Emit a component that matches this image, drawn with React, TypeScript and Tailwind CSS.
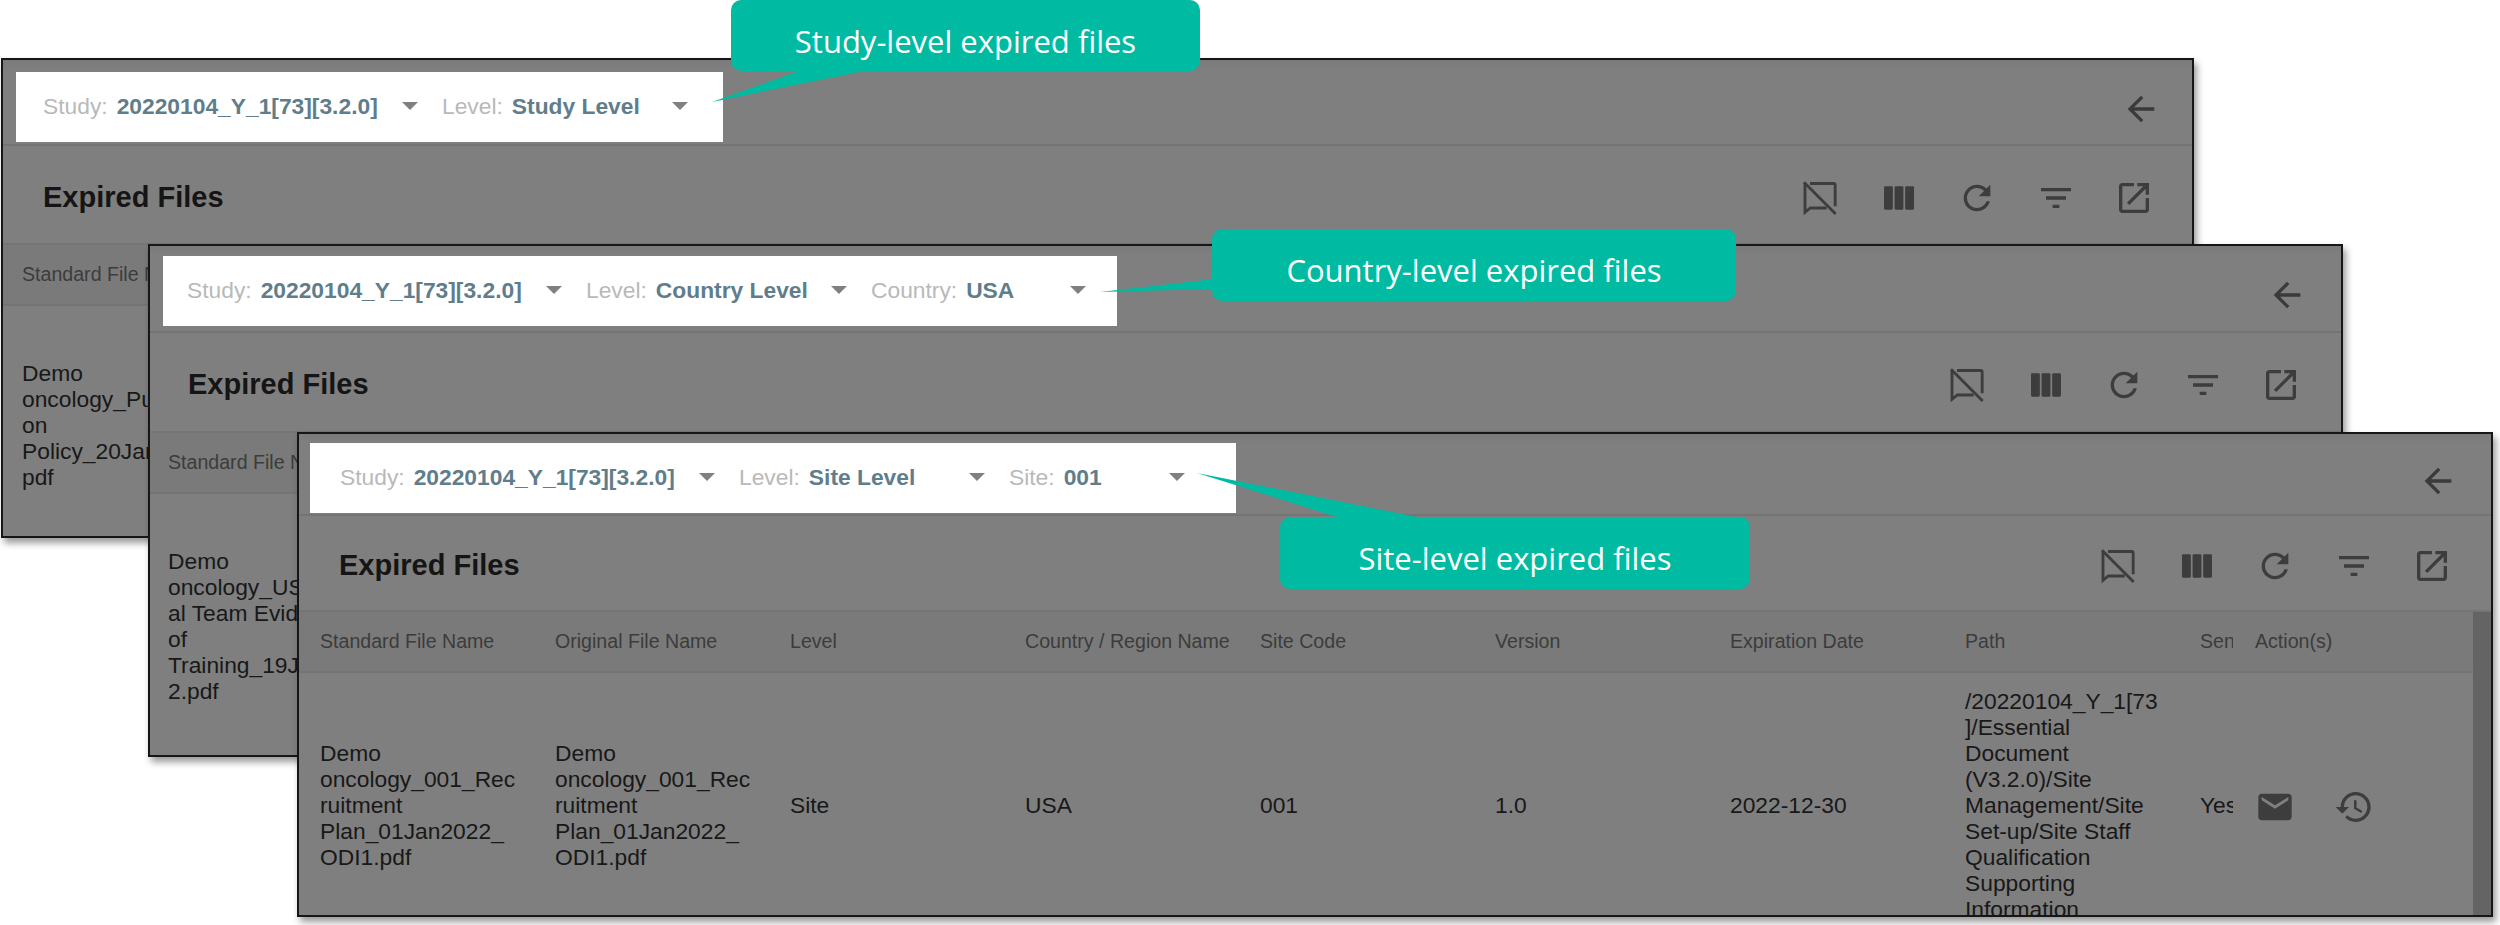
const fontSans = "font-['Liberation_Sans',Arial,sans-serif]";

function ArrowBack() {
  return (
    <svg viewBox="0 0 24 24" className="w-10 h-10 fill-[#3a3a3a]">
      <path d="M20 11H7.83l5.59-5.59L12 4l-8 8 8 8 1.41-1.41L7.83 13H20v-2z" />
    </svg>
  );
}

function NotesOff() {
  return (
    <svg viewBox="0 0 24 24" className="w-10 h-10 fill-none stroke-[#3d3d3d] stroke-[1.7]">
      <path d="M6 3.3h14.2c.5 0 .9.4.9.9V17" />
      <path d="M3 3v17.6L6.2 18H16" />
      <path d="M2.4 2.6l19 19" />
    </svg>
  );
}

function ViewColumn() {
  return (
    <svg viewBox="0 0 24 24" className="w-10 h-10 fill-[#3d3d3d]">
      <rect x="3" y="5" width="5.3" height="14" rx="0.7" />
      <rect x="9.35" y="5" width="5.3" height="14" rx="0.7" />
      <rect x="15.7" y="5" width="5.3" height="14" rx="0.7" />
    </svg>
  );
}

function Refresh() {
  return (
    <svg viewBox="0 0 24 24" className="w-10 h-10 fill-[#3d3d3d]">
      <path d="M17.65 6.35C16.2 4.9 14.21 4 12 4c-4.42 0-7.99 3.58-7.99 8s3.57 8 7.99 8c3.73 0 6.84-2.55 7.73-6h-2.08c-.82 2.33-3.04 4-5.65 4-3.31 0-6-2.69-6-6s2.69-6 6-6c1.66 0 3.14.69 4.22 1.78L13 11h7V4l-2.35 2.35z" />
    </svg>
  );
}

function FilterList() {
  return (
    <svg viewBox="0 0 24 24" className="w-10 h-10 fill-[#3d3d3d]">
      <path d="M10 18h4v-2h-4v2zM3 6v2h18V6H3zm3 7h12v-2H6v2z" />
    </svg>
  );
}

function OpenInNew() {
  return (
    <svg viewBox="0 0 24 24" className="w-10 h-10 fill-[#3d3d3d]">
      <path d="M19 19H5V5h7V3H5c-1.11 0-2 .9-2 2v14c0 1.1.89 2 2 2h14c1.1 0 2-.9 2-2v-7h-2v7zM14 3v2h3.59l-9.83 9.83 1.41 1.41L19 6.41V10h2V3h-7z" />
    </svg>
  );
}

function Mail() {
  return (
    <svg viewBox="0 0 24 24" className="w-10 h-10 fill-[#3d3d3d]">
      <path d="M20 4H4c-1.1 0-1.99.9-1.99 2L2 18c0 1.1.9 2 2 2h16c1.1 0 2-.9 2-2V6c0-1.1-.9-2-2-2zm0 4-8 5-8-5V6l8 5 8-5v2z" />
    </svg>
  );
}

function History() {
  return (
    <svg viewBox="0 0 24 24" className="w-10 h-10 fill-[#3d3d3d]">
      <path d="M13 3c-4.97 0-9 4.03-9 9H1l3.89 3.89.07.14L9 12H6c0-3.87 3.13-7 7-7s7 3.13 7 7-3.13 7-7 7c-1.93 0-3.68-.79-4.94-2.06l-1.42 1.42C8.27 19.99 10.51 21 13 21c4.97 0 9-4.03 9-9s-4.03-9-9-9zm-1 5v5l4.28 2.54.72-1.21-3.5-2.08V8H12z" />
    </svg>
  );
}

function Select({ label, value, width }: { label: string; value: string; width: string }) {
  return (
    <div className={`flex items-center shrink-0 pr-[24px] ${width}`}>
      <span className="text-[#b9b9b9] mr-[9px]">{label}</span>
      <span className="font-bold text-[#607d8b]">{value}</span>
      <span className="ml-auto w-0 h-0 border-x-[8px] border-x-transparent border-t-[8px] border-t-[#808080]" />
    </div>
  );
}

function Lines({ lines }: { lines: string[] }) {
  return (
    <div className="whitespace-nowrap">
      {lines.map((l, i) => (
        <div key={i}>{l}</div>
      ))}
    </div>
  );
}

type Filter = { label: string; value: string; width: string };

function Window({
  frame,
  head,
  bar,
  titleRow,
  bodyPad,
  rowHeight,
  arrowPad,
  filters,
  lines,
  full,
}: {
  frame: string;
  head: string;
  bar: string;
  titleRow: string;
  bodyPad: string;
  rowHeight: string;
  arrowPad: string;
  filters: Filter[];
  lines: string[];
  full?: boolean;
}) {
  return (
    <div className={`absolute overflow-hidden flex flex-col bg-[#7f7f7f] border-2 border-[#161616] shadow-[3px_5px_7px_rgba(0,0,0,0.4)] ${fontSans} ${frame}`}>
      {/* Top bar */}
      <div className={`flex items-start justify-between shrink-0 border-b-2 border-[#747474] bg-gradient-to-b from-[#7a7a7a] to-[#7f7f7f] to-[9px] ${head}`}>
        <div className={`flex items-center h-[70px] pb-[2px] bg-white text-[22.8px] ${bar}`}>
          {filters.map((f) => (
            <Select key={f.label} label={f.label} value={f.value} width={f.width} />
          ))}
        </div>
        <div className={`self-center pt-[13px] ${arrowPad}`}>
          <ArrowBack />
        </div>
      </div>

      {/* Title */}
      <div className={`flex items-center justify-between shrink-0 pt-[6px] ${titleRow}`}>
        <h2 className="font-bold text-[29px] text-[#151515]">Expired Files</h2>
        <div className="flex items-center gap-[38.5px]">
          <NotesOff />
          <ViewColumn />
          <Refresh />
          <FilterList />
          <OpenInNew />
        </div>
      </div>

      {/* Table */}
      <div className="flex flex-1 min-h-0 border-t-2 border-[#757575]">
        <div className="flex-1 min-w-0">
          <div className={`grid grid-cols-[235px_235px_235px_235px_235px_235px_235px_235px_55px_1fr] items-center h-[61px] border-b-2 border-[#747474] bg-[#7a7a7a] text-[19.6px] text-[#3c3c3c] ${bodyPad}`}>
            <div className="whitespace-nowrap">Standard File Name</div>
            {full && (
              <>
                <div>Original File Name</div>
                <div>Level</div>
                <div>Country / Region Name</div>
                <div>Site Code</div>
                <div>Version</div>
                <div>Expiration Date</div>
                <div>Path</div>
                <div className="w-[33px] overflow-hidden whitespace-nowrap">Send</div>
                <div>Action(s)</div>
              </>
            )}
          </div>
          <div className={`grid grid-cols-[235px_235px_235px_235px_235px_235px_235px_235px_55px_1fr] items-center text-[22.8px] leading-[26px] text-[#181818] ${rowHeight} ${bodyPad}`}>
            <Lines lines={lines} />
            {full && (
              <>
                <Lines lines={lines} />
                <div>Site</div>
                <div>USA</div>
                <div>001</div>
                <div>1.0</div>
                <div>2022-12-30</div>
                <Lines
                  lines={[
                    "/20220104_Y_1[73",
                    "]/Essential",
                    "Document",
                    "(V3.2.0)/Site",
                    "Management/Site",
                    "Set-up/Site Staff",
                    "Qualification",
                    "Supporting",
                    "Information",
                  ]}
                />
                <div className="w-[33px] overflow-hidden">Yes</div>
                <div className="flex items-center gap-[39px] pt-[4px]">
                  <Mail />
                  <History />
                </div>
              </>
            )}
          </div>
        </div>
        <div className="w-[18px] shrink-0 bg-[#646464]" />
      </div>
    </div>
  );
}

function Callout({ box, text, tip }: { box: string; text: string; tip: string }) {
  return (
    <>
      <svg viewBox="0 0 2500 925" className="absolute inset-0 w-[2500px] h-[925px] fill-[#00bba2] pointer-events-none">
        <polygon points={tip} />
      </svg>
      <div className={`absolute flex items-center justify-center pt-[11px] rounded-[10px] bg-[#00bba2] text-white text-[31px] font-['Open_Sans',sans-serif] ${box}`}>
        {text}
      </div>
    </>
  );
}

export default function App() {
  return (
    <div className="relative w-[2500px] h-[925px] bg-white overflow-hidden">
      <Window
        frame="left-[1px] top-[58px] w-[2193px] h-[480px]"
        head="h-[86px]"
        bar="ml-[13px] mt-[12px] w-[707px] pl-[27px]"
        titleRow="h-[97px] pl-[40px] pr-[38px]"
        bodyPad="pl-[19px]"
        rowHeight="h-[238px]"
        arrowPad="pr-[31px]"
        filters={[
          { label: "Study:", value: "20220104_Y_1[73][3.2.0]", width: "w-[399px]" },
          { label: "Level:", value: "Study Level", width: "w-[270px]" },
        ]}
        lines={["Demo", "oncology_Publicati", "on", "Policy_20Jan2022_", "pdf"]}
      />
      <Window
        frame="left-[148px] top-[244px] w-[2195px] h-[513px]"
        head="h-[87px]"
        bar="ml-[13px] mt-[10px] w-[954px] pl-[24px]"
        titleRow="h-[98px] pl-[38px] pr-[40px]"
        bodyPad="pl-[18px]"
        rowHeight="h-[264px]"
        arrowPad="pr-[34px]"
        filters={[
          { label: "Study:", value: "20220104_Y_1[73][3.2.0]", width: "w-[399px]" },
          { label: "Level:", value: "Country Level", width: "w-[285px]" },
          { label: "Country:", value: "USA", width: "w-[239px]" },
        ]}
        lines={["Demo", "oncology_USA_Loc", "al Team Evidence", "of", "Training_19Jan202", "2.pdf"]}
      />
      <Window
        frame="left-[297px] top-[432px] w-[2196px] h-[485px]"
        head="h-[82px]"
        bar="ml-[11px] mt-[9px] w-[926px] pl-[30px]"
        titleRow="h-[94px] pl-[40px] pr-[39px]"
        bodyPad="pl-[21px]"
        rowHeight="h-[264px]"
        arrowPad="pr-[33px]"
        filters={[
          { label: "Study:", value: "20220104_Y_1[73][3.2.0]", width: "w-[399px]" },
          { label: "Level:", value: "Site Level", width: "w-[270px]" },
          { label: "Site:", value: "001", width: "w-[200px]" },
        ]}
        lines={["Demo", "oncology_001_Rec", "ruitment", "Plan_01Jan2022_", "ODI1.pdf"]}
        full
      />

      <Callout box="left-[731px] top-0 w-[469px] h-[71px]" tip="712,102 802,70 869,70" text="Study-level expired files" />
      <Callout box="left-[1212px] top-[229px] w-[524px] h-[72px]" tip="1100,292 1214,279 1214,289" text="Country-level expired files" />
      <Callout box="left-[1280px] top-[517px] w-[470px] h-[72px]" tip="1197,473 1340,518 1422,518" text="Site-level expired files" />
    </div>
  );
}
